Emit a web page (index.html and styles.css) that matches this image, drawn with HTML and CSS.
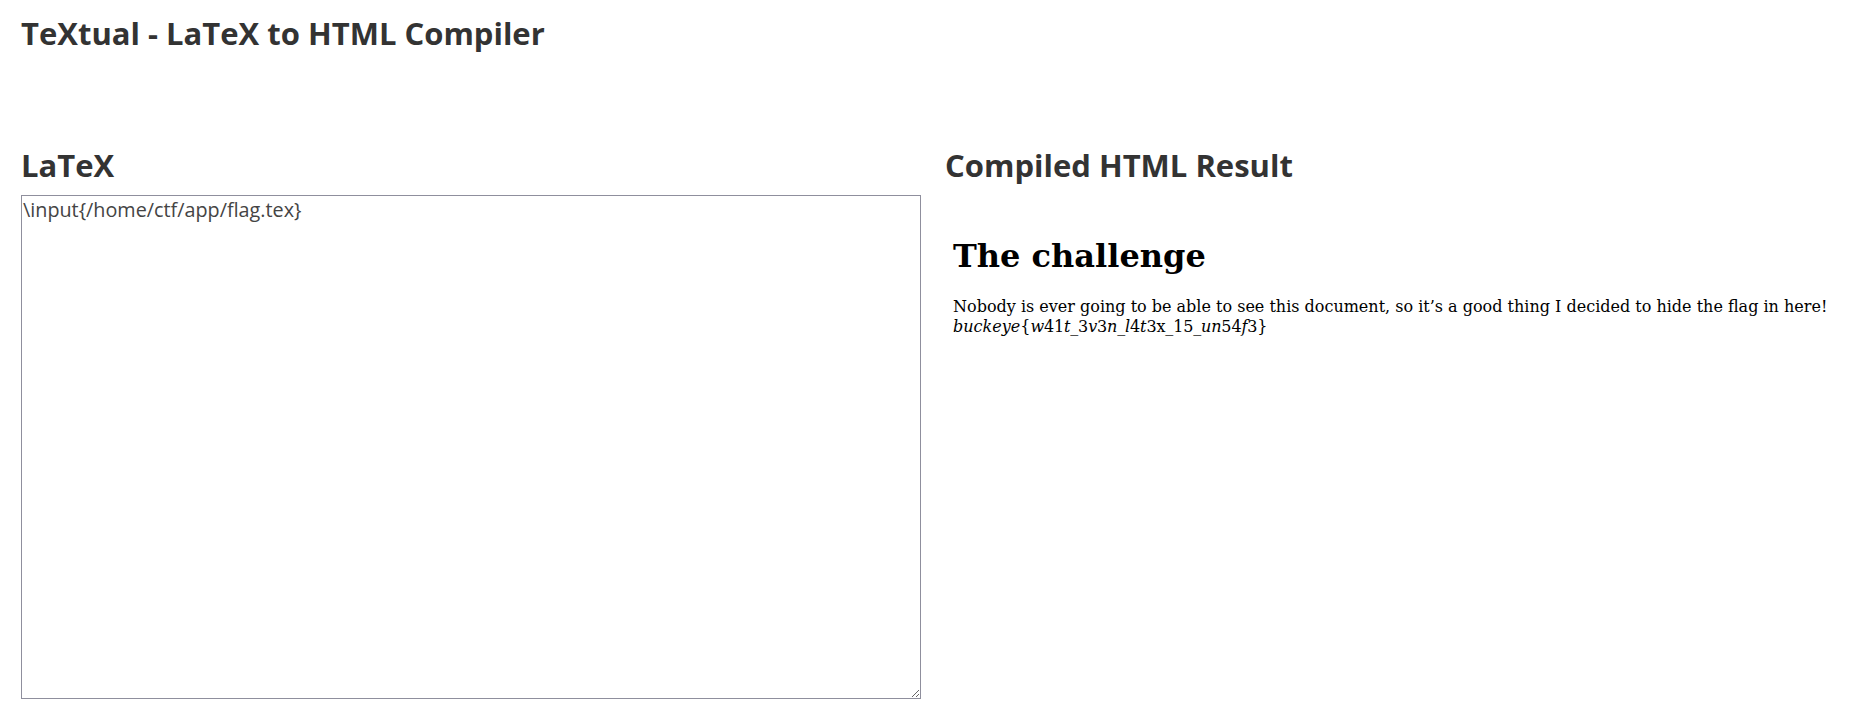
FILE: index.html
```html
<!DOCTYPE html>
<html lang="en">
<head>
<meta charset="utf-8">
<title>TeXtual - LaTeX to HTML Compiler</title>
<link rel="stylesheet" href="styles.css">
</head>
<body>
<h1 class="title">TeXtual - LaTeX to HTML Compiler</h1>
<main class="panes">
  <section class="pane">
    <h2 class="pane-title">LaTeX</h2>
    <textarea class="editor" spellcheck="true">\input{/home/ctf/app/flag.tex}</textarea>
  </section>
  <section class="pane">
    <h2 class="pane-title">Compiled HTML Result</h2>
    <div class="result">
      <h1 class="doc-title">The challenge</h1>
      <p class="doc-text">Nobody is ever going to be able to see this document, so it’s a good thing I decided to hide the flag in here!<br><span class="mi">buckeye</span>{<span class="flag"><span class="mi">w</span>41<span class="mi">t</span>_3<span class="mi">v</span>3<span class="mi">n</span>_<span class="mi">l</span>4<span class="mi">t</span>3x_15_<span class="mi">un</span>54<span class="mi">f</span>3</span>}</p>
    </div>
  </section>
</main>
</body>
</html>
```

FILE: styles.css
```css
html, body {
  margin: 0;
  padding: 0;
  background: #fff;
}

body {
  font-family: "Open Sans", "Noto Sans", sans-serif;
  color: #333;
  padding: 0 0 0 21px;
}

.title {
  font-size: 31px;
  font-weight: 700;
  line-height: 40px;
  margin: 13px 0 0 0;
}

.panes {
  display: grid;
  grid-template-columns: 900px 1fr;
  column-gap: 24px;
  margin-top: 92px;
}

.pane {
  display: flex;
  flex-direction: column;
  min-width: 0;
}

.pane-title {
  font-size: 31px;
  font-weight: 700;
  line-height: 40px;
  margin: 0 0 10px 0;
}

.editor {
  box-sizing: border-box;
  width: 900px;
  height: 504px;
  border: 1px solid #8f8f9d;
  border-radius: 0;
  padding: 2px 1px;
  margin: 0;
  font-family: "Open Sans", "Noto Sans", sans-serif;
  font-size: 19.8px;
  line-height: 24px;
  color: #444;
  background: #fff;
  resize: both;
  outline: none;
}

.result {
  padding: 8px 0 8px 8px;
  font-family: "DejaVu Serif", serif;
  color: #000;
}

.doc-title {
  font-size: 32px;
  font-weight: 700;
  line-height: 37px;
  margin: 35px 0 22px 0;
}

.doc-text {
  font-size: 16px;
  line-height: 20px;
  margin: 0;
  white-space: nowrap;
}

.mi {
  font-style: italic;
}

.flag {
  letter-spacing: -0.15px;
}
```
